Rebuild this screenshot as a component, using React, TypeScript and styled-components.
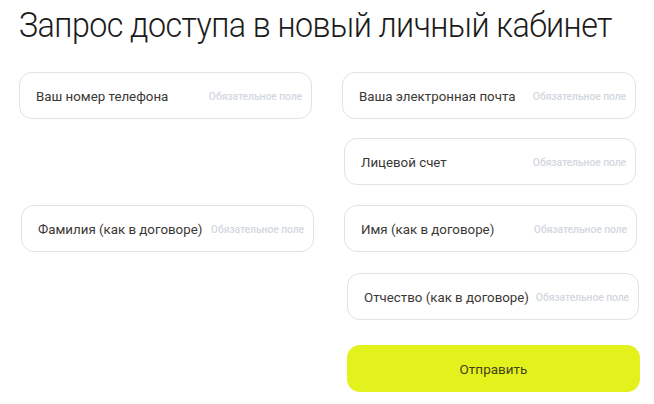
import * as React from 'react'
import styled, { createGlobalStyle } from 'styled-components'

const GlobalStyle = createGlobalStyle`
  html, body {
    margin: 0;
    padding: 0;
    background: #ffffff;
  }
  * {
    box-sizing: border-box;
  }
`

const Page = styled.div`
  width: 654px;
  height: 404px;
  padding: 6px 0 0 19px;
  font-family: Roboto, "Noto Sans", sans-serif;
  overflow: hidden;
`

const Title = styled.h1`
  margin: 0;
  font-family: Roboto, sans-serif;
  font-weight: 300;
  font-size: 35px;
  line-height: 40px;
  color: #1b1b1b;
  letter-spacing: -0.6px;
  transform-origin: left center;
  transform: scaleX(0.92);
  white-space: nowrap;
`

const Form = styled.form`
  display: grid;
  grid-template-columns: 293px 294px;
  grid-auto-rows: 47px;
  column-gap: 30px;
  row-gap: 19px;
  margin-top: 26px;
`

type Cell = { $col: number; $row: number; $dx?: number; $dy?: number; $dr?: number }

const Field = styled.label<Cell>`
  grid-column: ${p => p.$col};
  grid-row: ${p => p.$row};
  margin: ${p => p.$dy ?? 0}px ${p => -(p.$dr ?? 0)}px 0 ${p => p.$dx ?? 0}px;
  display: flex;
  align-items: center;
  justify-content: space-between;
  gap: 4px;
  height: 47px;
  padding: 1px 9px 0 16px;
  border: 1px solid #e2e2e2;
  border-radius: 13px;
  background: #ffffff;
`

const Label = styled.span`
  font-size: 13.3px;
  color: #3b3834;
  white-space: nowrap;
`

const Required = styled.span`
  font-size: 10.4px;
  font-weight: 500;
  color: #d3d8e0;
  white-space: nowrap;
  letter-spacing: -0.1px;
`

const Submit = styled.button<Cell>`
  grid-column: ${p => p.$col};
  grid-row: ${p => p.$row};
  margin: ${p => p.$dy ?? 0}px ${p => -(p.$dr ?? 0)}px 0 ${p => p.$dx ?? 0}px;
  height: 47px;
  border: none;
  border-radius: 13px;
  background: #e3f11d;
  font-family: Roboto, sans-serif;
  font-size: 13.5px;
  color: #44431c;
  cursor: pointer;
`

type FieldDef = { label: string; col: number; row: number; dx?: number; dy?: number; dr?: number }

const fields: FieldDef[] = [
  { label: 'Ваш номер телефона', col: 1, row: 1 },
  { label: 'Ваша электронная почта', col: 2, row: 1 },
  { label: 'Лицевой счет', col: 2, row: 2, dx: 2 },
  { label: 'Фамилия (как в договоре)', col: 1, row: 3, dx: 2, dy: 1, dr: 2 },
  { label: 'Имя (как в договоре)', col: 2, row: 3, dx: 2, dy: 1, dr: 1 },
  { label: 'Отчество (как в договоре)', col: 2, row: 4, dx: 5, dy: 3, dr: 3 },
]

export default function App() {
  return (
    <Page>
      <GlobalStyle />
      <Title>Запрос доступа в новый личный кабинет</Title>
      <Form onSubmit={e => e.preventDefault()}>
        {fields.map(f => (
          <Field key={f.label} $col={f.col} $row={f.row} $dx={f.dx} $dy={f.dy} $dr={f.dr}>
            <Label>{f.label}</Label>
            <Required>Обязательное поле</Required>
          </Field>
        ))}
        <Submit type="submit" $col={2} $row={5} $dx={5} $dy={9} $dr={4}>Отправить</Submit>
      </Form>
    </Page>
  )
}
